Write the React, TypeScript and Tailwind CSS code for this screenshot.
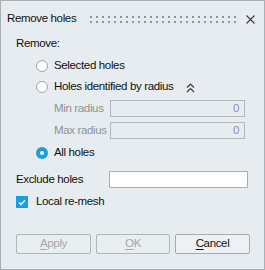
import React from "react";

function Radio({ checked }: { checked?: boolean }) {
  if (checked) {
    return (
      <div className="w-[12px] h-[12px] rounded-full bg-[#1a9ee0] flex items-center justify-center shrink-0">
        <div className="w-[4px] h-[4px] rounded-full bg-white" />
      </div>
    );
  }
  return <div className="w-[12px] h-[12px] rounded-full bg-white border border-[#9ea4a9] shrink-0" />;
}

function Dots() {
  const cols = Array.from({ length: 25 });
  return (
    <div className="flex gap-[4px]">
      {cols.map((_, i) => (
        <div key={i} className="flex flex-col gap-[3px]">
          <div className="w-[2px] h-[2px] bg-[#8e949a]" />
          <div className="w-[2px] h-[2px] bg-[#8e949a]" />
        </div>
      ))}
    </div>
  );
}

export default function App() {
  return (
    <div
      className="w-[265px] h-[270px] border border-[#a9afb3] bg-[#e6ecf0] text-[11.5px] tracking-[-0.35px] whitespace-nowrap text-[#111] flex flex-col leading-none"
      style={{ fontFamily: '"Liberation Sans", Arial, sans-serif' }}
    >
      {/* Title */}
      <div className="h-[36px] flex items-center pl-[6px] pr-[9px] shrink-0">
        <span className="w-[83px]">Remove holes</span>
        <Dots />
        <div className="ml-auto">
          <svg width="9" height="9" viewBox="0 0 9 9">
            <path d="M0.5 0.5 L8.5 8.5 M8.5 0.5 L0.5 8.5" stroke="#3a3d40" strokeWidth="1.1" />
          </svg>
        </div>
      </div>

      {/* Remove: */}
      <div className="h-[14px] flex items-center pl-[15px] shrink-0">Remove:</div>

      {/* Selected holes */}
      <div className="h-[18px] mt-[6px] flex items-center pl-[35px] gap-[6px] shrink-0">
        <Radio />
        <span>Selected holes</span>
      </div>

      {/* Holes identified by radius */}
      <div className="h-[18px] mt-[3px] flex items-center pl-[35px] gap-[6px] shrink-0">
        <Radio />
        <span>Holes identified by radius</span>
        <svg width="9" height="10" viewBox="0 0 9 10" className="ml-[7px] mt-[1px]">
          <path d="M1 4.5 L4.5 1 L8 4.5 M1 9 L4.5 5.5 L8 9" stroke="#3a3d40" strokeWidth="1.2" fill="none" />
        </svg>
      </div>

      {/* Min radius */}
      <div className="h-[17px] mt-[4px] flex items-center pl-[53px] shrink-0">
        <span className="w-[56px] text-[#8d9398]">Min radius</span>
        <div className="w-[135px] h-[17px] border border-[#b3b8bc] flex items-center justify-end pr-[5px] text-[#8d9398]">0</div>
      </div>

      {/* Max radius */}
      <div className="h-[17px] mt-[5px] flex items-center pl-[53px] shrink-0">
        <span className="w-[56px] text-[#8d9398]">Max radius</span>
        <div className="w-[135px] h-[17px] border border-[#b3b8bc] flex items-center justify-end pr-[5px] text-[#8d9398]">0</div>
      </div>

      {/* All holes */}
      <div className="h-[18px] mt-[5px] flex items-center pl-[35px] gap-[6px] shrink-0">
        <Radio checked />
        <span>All holes</span>
      </div>

      {/* Exclude holes */}
      <div className="h-[17px] mt-[9px] flex items-center pl-[15px] shrink-0">
        <span className="w-[93px]">Exclude holes</span>
        <div className="w-[139px] h-[17px] border border-[#a8adb1] bg-white" />
      </div>

      {/* Local re-mesh */}
      <div className="h-[18px] mt-[5px] flex items-center pl-[15px] gap-[8px] shrink-0">
        <div className="w-[12px] h-[12px] bg-[#1a9ee0] flex items-center justify-center">
          <svg width="8" height="7" viewBox="0 0 8 7">
            <path d="M1 3.5 L3 5.5 L7 1.2" stroke="white" strokeWidth="1.4" fill="none" />
          </svg>
        </div>
        <span>Local re-mesh</span>
      </div>

      {/* Buttons */}
      <div className="mt-[23px] flex pl-[15px] gap-[5px] shrink-0">
        <div className="w-[75px] h-[20px] border border-[#b0b5b9] rounded-[2px] bg-[#e9eef1] flex items-center justify-center text-[#a2a8ac]">
          <span><span className="underline underline-offset-2">A</span>pply</span>
        </div>
        <div className="w-[74px] h-[20px] border border-[#b0b5b9] rounded-[2px] bg-[#e9eef1] flex items-center justify-center text-[#a2a8ac]">
          <span><span className="underline underline-offset-2">O</span>K</span>
        </div>
        <div className="w-[75px] h-[20px] border border-[#a5abaf] rounded-[2px] bg-[#edf1f4] flex items-center justify-center">
          <span><span className="underline underline-offset-2">C</span>ancel</span>
        </div>
      </div>
    </div>
  );
}
